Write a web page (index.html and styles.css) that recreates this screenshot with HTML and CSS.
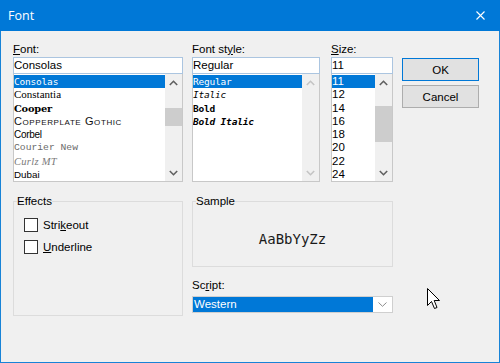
FILE: index.html
```html
<!DOCTYPE html>
<html>
<head>
<meta charset="utf-8">
<link rel="stylesheet" href="styles.css">
</head>
<body>
<div class="window">
  <div class="titlebar">
    <span class="title">Font</span>
    <svg class="close" width="9" height="9" viewBox="0 0 9 9"><path d="M0.5 0.5 L8.5 8.5 M8.5 0.5 L0.5 8.5" stroke="#fff" stroke-width="1.1" fill="none"/></svg>
  </div>
  <div class="content">
    <div class="top">
      <div class="col col-font">
        <div class="label"><u>F</u>ont:</div>
        <div class="textbox">Consolas</div>
        <div class="list">
          <div class="items">
            <div class="item sel f-consolas">Consolas</div>
            <div class="item f-constantia">Constantia</div>
            <div class="item f-cooper">Cooper</div>
            <div class="item f-copper">Copperplate Gothic</div>
            <div class="item f-corbel">Corbel</div>
            <div class="item f-courier">Courier New</div>
            <div class="item f-curlz">Curlz MT</div>
            <div class="item f-dubai">Dubai</div>
          </div>
          <div class="scrollbar">
            <div class="arrow"><svg width="9" height="6" viewBox="0 0 9 6"><polyline points="0.8,5 4.5,1.3 8.2,5" fill="none" stroke="#606060" stroke-width="1.6"/></svg></div>
            <div class="track"><div class="thumb thumb-font"></div></div>
            <div class="arrow"><svg width="9" height="6" viewBox="0 0 9 6"><polyline points="0.8,1 4.5,4.7 8.2,1" fill="none" stroke="#606060" stroke-width="1.6"/></svg></div>
          </div>
        </div>
      </div>
      <div class="col col-style">
        <div class="label">Font st<u>y</u>le:</div>
        <div class="textbox">Regular</div>
        <div class="list">
          <div class="items">
            <div class="item sel mono">Regular</div>
            <div class="item mono it">Italic</div>
            <div class="item mono bd">Bold</div>
            <div class="item mono bd it">Bold Italic</div>
          </div>
          <div class="scrollbar">
            <div class="arrow"><svg width="9" height="6" viewBox="0 0 9 6"><polyline points="0.8,5 4.5,1.3 8.2,5" fill="none" stroke="#c4c4c4" stroke-width="1.6"/></svg></div>
            <div class="track"></div>
            <div class="arrow"><svg width="9" height="6" viewBox="0 0 9 6"><polyline points="0.8,1 4.5,4.7 8.2,1" fill="none" stroke="#c4c4c4" stroke-width="1.6"/></svg></div>
          </div>
        </div>
      </div>
      <div class="col col-size">
        <div class="label"><u>S</u>ize:</div>
        <div class="textbox">11</div>
        <div class="list">
          <div class="items">
            <div class="item sel num">11</div>
            <div class="item num">12</div>
            <div class="item num">14</div>
            <div class="item num">16</div>
            <div class="item num">18</div>
            <div class="item num">20</div>
            <div class="item num">22</div>
            <div class="item num">24</div>
          </div>
          <div class="scrollbar">
            <div class="arrow"><svg width="9" height="6" viewBox="0 0 9 6"><polyline points="0.8,5 4.5,1.3 8.2,5" fill="none" stroke="#606060" stroke-width="1.6"/></svg></div>
            <div class="track"><div class="thumb thumb-size"></div></div>
            <div class="arrow"><svg width="9" height="6" viewBox="0 0 9 6"><polyline points="0.8,1 4.5,4.7 8.2,1" fill="none" stroke="#606060" stroke-width="1.6"/></svg></div>
          </div>
        </div>
      </div>
      <div class="buttons">
        <div class="btn btn-default">OK</div>
        <div class="btn">Cancel</div>
      </div>
    </div>
    <div class="bottom">
      <fieldset class="group effects">
        <legend>Effects</legend>
        <div class="effects-body">
          <div class="check"><span class="box"></span><span>Stri<u>k</u>eout</span></div>
          <div class="check"><span class="box"></span><span><u>U</u>nderline</span></div>
        </div>
      </fieldset>
      <div class="right">
        <fieldset class="group sample">
          <legend>Sample</legend>
          <div class="sample-body">AaBbYyZz</div>
        </fieldset>
        <div class="label script-label">Sc<u>r</u>ipt:</div>
        <div class="combo">
          <div class="combo-value">Western</div>
          <div class="combo-btn"><svg width="9" height="5" viewBox="0 0 9 5"><polyline points="0.5,0.5 4.5,4.3 8.5,0.5" fill="none" stroke="#8c8c8c" stroke-width="1"/></svg></div>
        </div>
      </div>
    </div>
  </div>
  <svg class="cursor" width="14" height="22" viewBox="0 0 14 22"><path d="M0.5 0.5 V17.5 L4.5 13.5 L7.5 20.5 L10 19.5 L7.2 12.5 H12.5 Z" fill="#fff" stroke="#000" stroke-width="1" stroke-linejoin="miter"/></svg>
</div>
</body>
</html>
```
FILE: styles.css
```css
html, body {
  margin: 0;
  padding: 0;
  background: #f0f0f0;
  overflow: hidden;
}

.window {
  position: relative;
  width: 500px;
  height: 363px;
  box-sizing: border-box;
  border: 1px solid #1883d7;
  border-top: 0;
  background: #f0f0f0;
  font-family: "Liberation Sans", Arial, sans-serif;
  font-size: 11.5px;
  color: #000;
}

.titlebar {
  height: 31px;
  margin: 0 -1px;
  background: #0078d7;
  display: flex;
  align-items: center;
  justify-content: space-between;
  padding: 0 15px 0 8px;
}

.title {
  font-family: "Open Sans", "Noto Sans", sans-serif;
  font-size: 12.5px;
  color: #fff;
  margin-top: -1px;
}

.close {
  display: block;
  margin-top: -1px;
}

.content {
  padding: 11px 0 0 12px;
}

.top {
  display: flex;
}

.col {
  display: flex;
  flex-direction: column;
}

.col-font { width: 170px; margin-right: 9px; }
.col-style { width: 128px; margin-right: 11px; }
.col-size { width: 62px; margin-right: 9px; }

.label {
  height: 14px;
  line-height: 14px;
  margin-bottom: 1px;
  white-space: nowrap;
}

u {
  text-decoration: underline;
  text-underline-offset: 1px;
}

.textbox {
  height: 17px;
  box-sizing: border-box;
  border: 1px solid #abc5e0;
  background: #fff;
  line-height: 15px;
  font-size: 11.5px;
  white-space: nowrap;
  overflow: hidden;
}

.list {
  height: 108px;
  box-sizing: border-box;
  border: 1px solid #c8c8c8;
  border-top: 0;
  background: #fff;
  display: flex;
}

.items {
  flex: 1;
  padding-top: 1px;
  overflow: hidden;
}

.item {
  height: 13.25px;
  line-height: 13px;
  white-space: nowrap;
  overflow: hidden;
  display: flex;
  align-items: center;
}

.item.sel {
  background: #0078d7;
  color: #fff;
}

.f-consolas, .mono {
  font-family: "DejaVu Sans Mono", monospace;
  font-size: 9.5px;
  letter-spacing: -0.2px;
}

.it { font-style: italic; }
.bd { font-weight: bold; }

.f-constantia {
  font-family: "Liberation Serif", serif;
  font-size: 11px;
}

.f-cooper {
  font-family: "DejaVu Serif", serif;
  font-weight: bold;
  font-size: 9.8px;
  letter-spacing: -0.2px;
}

.f-copper {
  font-family: "Liberation Sans", sans-serif;
  font-variant: small-caps;
  font-size: 11px;
  letter-spacing: 0.6px;
  color: #111;
}

.f-corbel {
  font-family: "Liberation Sans", sans-serif;
  font-size: 10px;
  letter-spacing: -0.3px;
}

.f-courier {
  font-family: "Liberation Mono", monospace;
  font-size: 9.7px;
  color: #6a6a6a;
}

.f-curlz {
  font-family: "Liberation Serif", serif;
  font-style: italic;
  font-size: 10.5px;
  color: #7a7a7a;
  letter-spacing: 0.3px;
}

.f-dubai {
  font-family: "Liberation Sans", sans-serif;
  font-size: 9.8px;
}

.num {
  font-size: 11.5px;
}

.scrollbar {
  width: 17px;
  background: #f0f0f0;
  display: flex;
  flex-direction: column;
}

.arrow {
  height: 17px;
  display: flex;
  align-items: center;
  justify-content: center;
}

.arrow svg { display: block; }

.track {
  flex: 1;
}

.thumb {
  background: #cdcdcd;
}

.thumb-font { margin-top: 17px; height: 18px; }
.thumb-size { margin-top: 15px; height: 36px; }

.buttons {
  width: 77px;
  padding-top: 16px;
  display: flex;
  flex-direction: column;
  gap: 4px;
}

.btn {
  height: 23px;
  box-sizing: border-box;
  border: 1px solid #adadad;
  background: #e1e1e1;
  display: flex;
  align-items: center;
  justify-content: center;
  font-size: 11.5px;
}

.btn-default {
  border-color: #0078d7;
}

.bottom {
  display: flex;
  margin-top: 12px;
}

.group {
  margin: 0;
  border: 1px solid #dcdcdc;
  padding: 0 0 0 3px;
  min-width: 0;
  box-sizing: border-box;
}

.group legend {
  padding: 0;
  line-height: 14px;
  height: 14px;
  font-size: 11.5px;
}

.effects {
  width: 170px;
}

.effects-body {
  height: 107px;
  box-sizing: border-box;
  padding: 10px 0 0 7px;
}

.check {
  display: flex;
  align-items: flex-start;
  height: 14px;
  line-height: 14px;
  gap: 5px;
  margin-bottom: 8px;
}

.box {
  width: 14px;
  height: 14px;
  box-sizing: border-box;
  border: 1px solid #333;
  background: #fff;
}

.right {
  width: 201px;
  margin-left: 9px;
  display: flex;
  flex-direction: column;
}

.sample {
  width: 201px;
}

.sample-body {
  height: 58px;
  box-sizing: border-box;
  padding: 3px 3px 0 0;
  display: flex;
  align-items: center;
  justify-content: center;
  font-family: "DejaVu Sans Mono", monospace;
  font-size: 14px;
  color: #1a1a1a;
}

.script-label {
  margin-top: 11px;
  margin-bottom: 4px;
}

.combo {
  height: 17px;
  box-sizing: border-box;
  border: 1px solid #cfcfcf;
  background: #fff;
  display: flex;
}

.combo-value {
  flex: 1;
  background: #0078d7;
  color: #fff;
  line-height: 15px;
  padding-left: 1px;
}

.combo-btn {
  width: 19px;
  display: flex;
  align-items: center;
  justify-content: center;
}

.combo-btn svg { display: block; }

.cursor {
  position: absolute;
  left: 426px;
  top: 288px;
}
```
